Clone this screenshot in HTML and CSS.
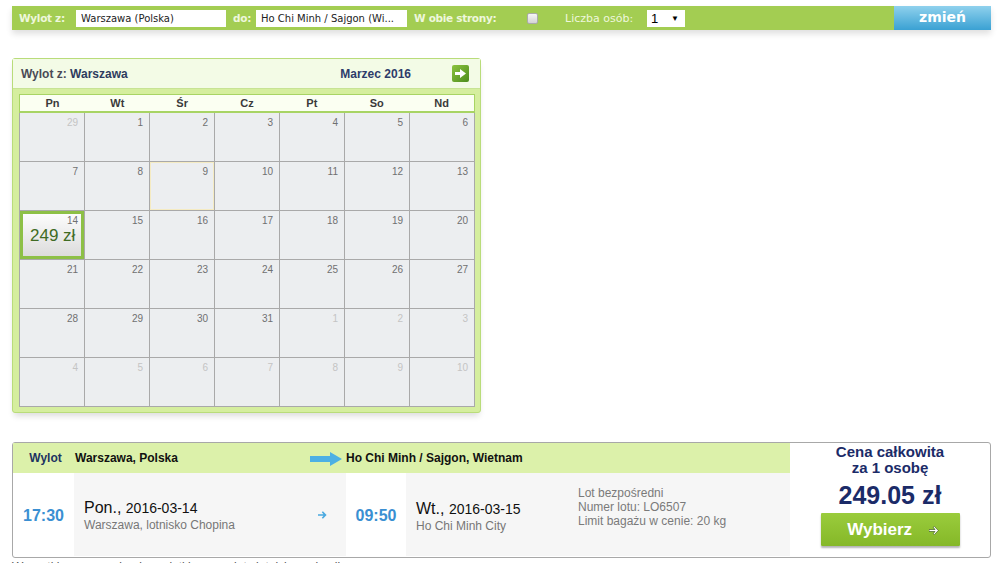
FILE: index.html
```html
<!DOCTYPE html>
<html lang="pl">
<head>
  <meta charset="UTF-8" />
  <title>Wybór lotu</title>
  <link rel="stylesheet" href="styles.css">
</head>
<body>
<div class="page">

  <form class="search-bar">
    <div class="search-fields">
      <label class="lbl lbl-from">Wylot z:</label>
      <input class="field field-from" type="text" value="Warszawa (Polska)">
      <label class="lbl lbl-to">do:</label>
      <input class="field field-to" type="text" value="Ho Chi Minh / Sajgon (Wi...">
      <label class="lbl lbl-both">W obie strony:</label>
      <input class="check" type="checkbox">
      <label class="lbl lbl-pax">Liczba osób:</label>
      <div class="pax-select"><span>1</span><span class="caret">▼</span></div>
    </div>
    <button type="button" class="btn-change">zmień</button>
  </form>

  <div class="calendar">
    <div class="cal-head">
      <div class="cal-title">Wylot z: <b>Warszawa</b></div>
      <div class="cal-month">Marzec 2016</div>
      <a class="cal-next" href="#">
        <svg width="11" height="9" viewBox="0 0 11 9"><path d="M0 3h5V0l6 4.5L5 9V6H0z" fill="#fff"/></svg>
      </a>
    </div>
    <div class="cal-body">
      <div class="weekdays">
        <div>Pn</div><div>Wt</div><div>Śr</div><div>Cz</div><div>Pt</div><div>So</div><div>Nd</div>
      </div>
      <div class="days">
        <div class="day out">29</div><div class="day">1</div><div class="day">2</div><div class="day">3</div><div class="day">4</div><div class="day">5</div><div class="day">6</div>
        <div class="day">7</div><div class="day">8</div><div class="day today">9</div><div class="day">10</div><div class="day">11</div><div class="day">12</div><div class="day">13</div>
        <div class="day selected">14<span class="price">249 zł</span></div><div class="day">15</div><div class="day">16</div><div class="day">17</div><div class="day">18</div><div class="day">19</div><div class="day">20</div>
        <div class="day">21</div><div class="day">22</div><div class="day">23</div><div class="day">24</div><div class="day">25</div><div class="day">26</div><div class="day">27</div>
        <div class="day">28</div><div class="day">29</div><div class="day">30</div><div class="day">31</div><div class="day out">1</div><div class="day out">2</div><div class="day out">3</div>
        <div class="day out">4</div><div class="day out">5</div><div class="day out">6</div><div class="day out">7</div><div class="day out">8</div><div class="day out">9</div><div class="day out">10</div>
      </div>
    </div>
  </div>

  <div class="flight">
    <div class="flight-main">
      <div class="flight-row flight-top">
        <div class="c-time dir">Wylot</div>
        <div class="c-place">
          <span>Warszawa, Polska</span>
          <svg class="big-arrow" width="32" height="14" viewBox="0 0 32 14"><path d="M0 4h20V0l12 7-12 7v-4H0z" fill="#4cb0e4"/></svg>
        </div>
        <div class="c-dest c-dest-head">Ho Chi Minh / Sajgon, Wietnam</div>
      </div>
      <div class="flight-row flight-info">
        <div class="c-time time">17:30</div>
        <div class="c-place leg">
          <div>
            <div class="date">Pon., <span>2016-03-14</span></div>
            <div class="airport">Warszawa, lotnisko Chopina</div>
          </div>
          <svg class="small-arrow" width="9" height="8" viewBox="0 0 9 8"><path d="M0 3.2h5.5L3.8 1.2 4.9.2 8.6 4 4.9 7.8 3.8 6.8l1.7-2H0z" fill="#4aa9e0"/></svg>
        </div>
        <div class="c-time time arr">09:50</div>
        <div class="c-dest leg">
          <div class="arr-leg">
            <div class="date">Wt., <span>2016-03-15</span></div>
            <div class="airport">Ho Chi Minh City</div>
          </div>
          <div class="notes">
            Lot bezpośredni<br>
            Numer lotu: LO6507<br>
            Limit bagażu w cenie: 20 kg
          </div>
        </div>
      </div>
    </div>
    <div class="flight-price">
      <div class="price-label">Cena całkowita<br>za 1 osobę</div>
      <div class="price-total">249.05 zł</div>
      <button type="button" class="btn-select">Wybierz
        <svg width="10" height="9" viewBox="0 0 10 9"><path d="M0 3.5h6L4.2 1.3 5.3.3 9.3 4.5 5.3 8.7 4.2 7.7 6 5.5H0z" fill="#fff" stroke="#2d4a10" stroke-width=".6"/></svg>
      </button>
    </div>
  </div>

  <p class="footnote">Wszystkie ceny zawierają podatki oraz opłaty lotniskowe i paliwowe.</p>

</div>
</body>
</html>
```

FILE: styles.css
```css
body {
  margin: 0;
  background: #fff;
  font-family: "Liberation Sans", Arial, sans-serif;
  color: #222;
}

.page {
  width: 979px;
  padding: 6px 0 0 12px;
}

/* search bar */
.search-bar {
  display: flex;
  height: 24px;
  box-shadow: 0 4px 6px rgba(0, 0, 0, 0.12);
  font-family: "DejaVu Sans", Verdana, sans-serif;
  font-size: 11px;
}

.search-fields {
  flex: 1;
  display: flex;
  align-items: center;
  padding-left: 7px;
  background: #a3cd52;
}

.lbl {
  flex: none;
  color: #eef7dc;
  font-size: 10.5px;
  font-weight: bold;
  letter-spacing: -0.3px;
}

.lbl-from { width: 57px; }
.lbl-to { width: 23px; margin-left: 7px; }
.lbl-both { width: 113px; margin-left: 7px; }
.lbl-pax {
  width: 82px;
  font-size: 11px;
  font-weight: normal;
  letter-spacing: 0;
}

.field {
  height: 17px;
  box-sizing: border-box;
  border: none;
  padding: 0 5px;
  font-family: "DejaVu Sans", Verdana, sans-serif;
  font-size: 10px;
  color: #222;
  background: #fff;
}

.field-from { width: 150px; }
.field-to { width: 151px; }

.check {
  appearance: none;
  flex: none;
  width: 11px;
  height: 11px;
  margin: 0 27px 0 0;
  border: 1px solid #aaa;
  border-radius: 2px;
  background: linear-gradient(#f6f6f6, #d4d4d4);
}

.pax-select {
  display: flex;
  justify-content: space-between;
  align-items: center;
  width: 38px;
  height: 17px;
  box-sizing: border-box;
  padding: 0 6px 0 4px;
  background: #fff;
  font-family: "Liberation Sans", Arial, sans-serif;
  font-size: 13px;
  color: #000;
}

.pax-select .caret { font-size: 8px; }

.btn-change {
  width: 97px;
  border: none;
  background: linear-gradient(#8fd1ed, #3aa1d3);
  color: #fff;
  font-family: "DejaVu Sans", Verdana, sans-serif;
  font-size: 14px;
  font-weight: bold;
  padding: 0 0 2px;
}

/* calendar */
.calendar {
  width: 469px;
  box-sizing: border-box;
  margin-top: 28px;
  border: 1px solid #b9dc7a;
  border-radius: 3px;
  background: #d5ee9e;
  box-shadow: 0 5px 6px -2px rgba(0, 0, 0, 0.14);
}

.cal-head {
  display: flex;
  align-items: center;
  height: 29px;
  padding: 0 11px 0 8px;
  background: #f3fbe6;
  border-bottom: 1px solid #c7e394;
  font-size: 12px;
  font-weight: bold;
}

.cal-title { flex: 1; color: #4a4a55; }
.cal-title b { color: #2e3b5e; }

.cal-month {
  color: #2e3c6a;
  margin-right: 41px;
}

.cal-next {
  display: flex;
  align-items: center;
  justify-content: center;
  width: 17px;
  height: 17px;
  border-radius: 2px;
  background: linear-gradient(135deg, #8cc43e, #4d8c1e);
}

.cal-body {
  padding: 5px 5px 5px 6px;
}

.weekdays {
  display: grid;
  grid-template-columns: repeat(7, 1fr);
  height: 16px;
  border: 1px solid #a8d464;
  border-bottom-width: 2px;
  background: #fbfff2;
  font-size: 11px;
  font-weight: bold;
  color: #3a3a3a;
  line-height: 16px;
  text-align: center;
}

.days {
  display: grid;
  grid-template-columns: repeat(7, 1fr);
  grid-auto-rows: 48px;
  gap: 1px;
  padding: 0 1px 1px;
  background: #a9a9a9;
}

.day {
  background: #eceef0;
  padding: 4px 6px 0 0;
  text-align: right;
  font-size: 10px;
  color: #707070;
}

.day.out { color: #c4c4c4; }

.day.today { box-shadow: inset 0 0 0 1px #f5ebc2; }

.day.selected {
  border: 3px solid #8dc046;
  padding: 1px 3px 0 0;
  background: linear-gradient(#fcfcfc, #dcdcdc);
}

.day .price {
  display: block;
  text-align: left;
  padding-left: 7px;
  font-size: 17px;
  color: #3f6b24;
}

/* flight summary */
.flight {
  display: flex;
  margin-top: 29px;
  border: 1px solid #a8a8a8;
  border-radius: 3px;
  height: 114px;
}

.flight-main { flex: 1; }

.flight-row {
  display: grid;
  grid-template-columns: 61px 272px 60px 1fr;
}

.flight-top {
  height: 30px;
  align-items: center;
  background: #dcf1aa;
  font-size: 12px;
  font-weight: bold;
  color: #111;
}

.flight-top .dir {
  text-align: center;
  color: #1d3461;
  padding-left: 4px;
}

.c-dest-head { grid-column: 3 / 5; }

.c-place {
  display: flex;
  align-items: center;
  justify-content: space-between;
  padding: 0 4px 0 1px;
}

.big-arrow { margin-top: 1px; }

.flight-info {
  height: 83px;
  align-items: stretch;
}

.time {
  display: flex;
  align-items: center;
  justify-content: center;
  font-size: 16px;
  font-weight: bold;
  color: #3a8fd2;
  padding-top: 2px;
}

.leg {
  background: #f6f6f6;
  padding-left: 10px;
}

.c-place.leg { padding-right: 19px; }

.date {
  font-size: 16px;
  color: #111;
}

.date span { font-size: 14px; }

.airport {
  font-size: 12px;
  color: #777;
  margin-top: 1px;
}

.c-dest.leg {
  display: flex;
  align-items: center;
}

.arr-leg { width: 162px; padding-top: 3px; }
.c-place .date { padding-top: 1px; }

.notes {
  font-size: 12px;
  line-height: 14px;
  color: #7a7a7a;
  margin-top: -16px;
}

.flight-price {
  width: 200px;
  text-align: center;
  color: #1b2b68;
}

.price-label {
  font-size: 15px;
  font-weight: bold;
  line-height: 16px;
  padding-top: 1px;
}

.price-total {
  font-size: 25px;
  font-weight: bold;
  margin-top: 6px;
  line-height: 26px;
}

.btn-select {
  width: 139px;
  height: 33px;
  margin-top: 5px;
  border: none;
  border-radius: 1px;
  background: linear-gradient(#9acc3c, #85b828);
  box-shadow: 0 2px 2px rgba(0, 0, 0, 0.3);
  color: #fff;
  font-family: "Liberation Sans", Arial, sans-serif;
  font-size: 17px;
  font-weight: bold;
  padding-left: 12px;
}

.btn-select svg { margin-left: 12px; }

.footnote {
  margin: 2px 0 0;
  font-size: 12px;
  color: #555;
}
```
